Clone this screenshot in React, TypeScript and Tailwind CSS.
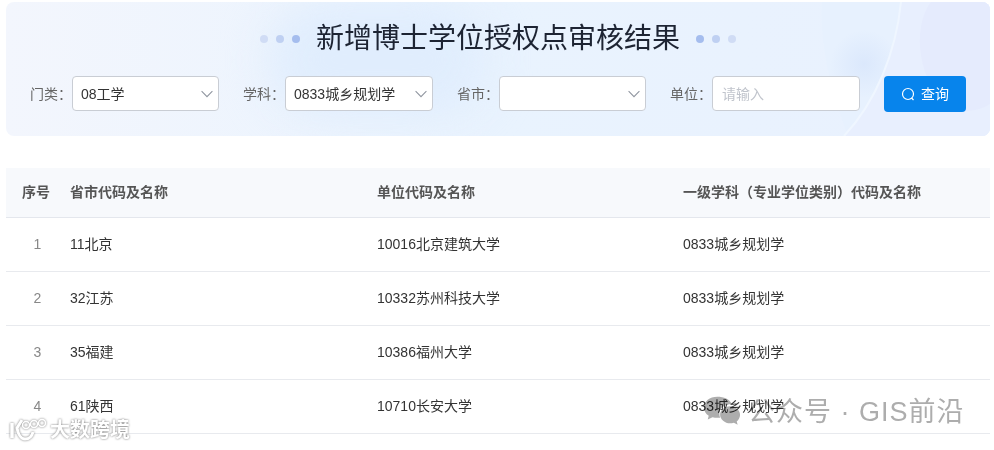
import React from "react";

const FONT = "font-['Liberation_Sans','Noto_Sans_CJK_SC',sans-serif]";
const COLON = "\uFF1A";

const Chevron = () => (
  <svg width="12" height="12" viewBox="0 0 12 12" fill="none" className="shrink-0">
    <path d="M.6 3.200 6 8.600l5.400-5.400" stroke="#9096a0" strokeWidth="1.100" />
  </svg>
);

const Select = ({ value, wide }: { value?: string; wide?: boolean }) => (
  <div className={`flex h-[35px] items-center justify-between rounded-[4px] border border-[#c9cdd4] bg-white pl-[8px] pr-[5px] ${wide ? "w-[148px]" : "w-[147px]"}`}>
    <span className="pt-[1px] text-[14px] text-[#333]">{value}</span>
    <Chevron />
  </div>
);

const Label = ({ children }: { children: string }) => (
  <span className="w-[42px] shrink-0 whitespace-nowrap text-[14px] leading-[36px] text-[#666]">{children + COLON}</span>
);

const Dots = ({ reverse }: { reverse?: boolean }) => (
  <div className={`flex gap-[8px] ${reverse ? "flex-row-reverse" : ""}`}>
    <span className="h-[8px] w-[8px] rounded-full bg-[#d0dcf5]" />
    <span className="h-[8px] w-[8px] rounded-full bg-[#bfd0f2]" />
    <span className="h-[8px] w-[8px] rounded-full bg-[#a5bdee]" />
  </div>
);

const rows = [
  ["1", "11北京", "10016北京建筑大学", "0833城乡规划学"],
  ["2", "32江苏", "10332苏州科技大学", "0833城乡规划学"],
  ["3", "35福建", "10386福州大学", "0833城乡规划学"],
  ["4", "61陕西", "10710长安大学", "0833城乡规划学"],
];

export default function App() {
  return (
    <div className={`${FONT} relative h-[450px] w-[994px] overflow-hidden bg-white px-[6px] pt-[2px]`}>
      <div className="relative h-[134px] w-[984px] overflow-hidden rounded-[8px] bg-gradient-to-r from-[#f3f6fd] via-[#e9f3fe] to-[#e9f1fe]">
        <div className="absolute left-[262px] top-[0px] h-[115px] w-[220px] rounded-full bg-[#e0edfd] blur-[22px]" />
        <svg className="absolute left-0 top-0" width="984" height="134" viewBox="0 0 984 134" fill="none">
          <defs>
            <radialGradient id="glow" cx="0.5" cy="0.5" r="0.5">
              <stop offset="0" stopColor="#dbe8fc" />
              <stop offset="1" stopColor="#dbe8fc" stopOpacity="0" />
            </radialGradient>
          </defs>
          <path d="M816 0C814 40 822 80 842 134H984V0Z" fill="#e7f1fe" />
          <circle cx="858" cy="62" r="34" fill="url(#glow)" />
          <path d="M895 0C890 50 870 100 838 134H984V0Z" fill="#e8effe" />
          <path d="M895 0C890 50 870 100 838 134" stroke="#eff6ff" strokeWidth="2" />
          <path d="M984 0H925C905 25 912 85 945 105C960 112 975 108 984 102Z" fill="#e5ebfd" />
        </svg>

        <div className="relative flex h-[74px] items-center justify-center gap-[16px]">
          <Dots />
          <h1 className="text-[28px] font-normal leading-[40px] text-[#1d2433]">新增博士学位授权点审核结果</h1>
          <Dots reverse />
        </div>

        <div className="relative flex items-start pl-[24px]">
          <Label>门类</Label>
          <Select value="08工学" />
          <div className="w-[24px]" />
          <Label>学科</Label>
          <Select value="0833城乡规划学" wide />
          <div className="w-[24px]" />
          <Label>省市</Label>
          <Select />
          <div className="w-[24px]" />
          <Label>单位</Label>
          <div className="flex h-[35px] w-[148px] items-center rounded-[4px] border border-[#c9cdd4] bg-white pl-[9px] pt-[1px] text-[14px] text-[#c0c4cc]">请输入</div>
          <button className="ml-[24px] flex h-[36px] w-[82px] items-center justify-center gap-[5px] rounded-[4px] bg-[#0784ec] text-[14px] text-white">
            <svg width="15" height="15" viewBox="0 0 15 15" fill="none">
              <circle cx="7" cy="7" r="5.500" stroke="white" strokeWidth="1.200" />
              <path d="M10.500 11l2 2" stroke="white" strokeWidth="1.200" />
            </svg>
            查询
          </button>
        </div>
      </div>

      <div className="mt-[32px] w-[984px]">
        <div className="flex h-[50px] items-center border-b border-[#e4e7ed] bg-[#f7f9fc] text-[14px] font-bold text-[#555]">
          <div className="w-[64px] pr-[4px] text-center">序号</div>
          <div className="w-[307px]">省市代码及名称</div>
          <div className="w-[306px]">单位代码及名称</div>
          <div>{"一级学科\uFF08专业学位类别\uFF09代码及名称"}</div>
        </div>
        {rows.map((r) => (
          <div key={r[0]} className="flex h-[54px] items-center border-b border-[#e8eaee] text-[14px] text-[#333]">
            <div className="w-[64px] pr-[1px] text-center text-[#888]">{r[0]}</div>
            <div className="w-[307px]">{r[1]}</div>
            <div className="w-[306px]">{r[2]}</div>
            <div>{r[3]}</div>
          </div>
        ))}
      </div>

      <div className="absolute left-[9px] top-[418px] flex items-center text-[20px] leading-[24px] text-white drop-shadow-[0_0_1px_#777]">
        <svg width="40" height="24" viewBox="0 0 40 24" fill="none" stroke="white">
          <path d="M3 5v15" strokeWidth="3.500" />
          <path d="M13 2 8 10c1 6 4 11 8 11 5 0 7-3 8-7" strokeWidth="3" />
          <circle cx="17" cy="7" r="3.500" strokeWidth="1.500" />
          <circle cx="25" cy="6" r="3.500" strokeWidth="1.500" />
          <circle cx="33" cy="5" r="3.500" strokeWidth="1.500" />
        </svg>
        <span className="ml-[1px] font-bold">大数跨境</span>
      </div>

      <div className="absolute left-[703px] top-[394px] flex items-center text-[27px] leading-[32px] text-[#adadad] mix-blend-multiply">
        <svg width="38" height="32" viewBox="0 0 40 32" fill="#adadad">
          <path d="M15 1C7 1 1 6 1 12c0 4 2 7 5 9l-1 4 5-2.500c2 .5 3 .7 5 .7 1 0 2 0 3-.2-.5-1.500-.8-2.500-.8-4 0-6 6-10.500 13-10.500C28 3.500 22 1 15 1z" />
          <path d="M39 20c0-5-5-9-10.500-9S18 15 18 20s5 9 10.500 9c1.500 0 2.500-.2 4-.6l4 2.100-1-3.500C37.500 25.500 39 23 39 20z" />
        </svg>
        <span className="ml-[7px] pt-[2px] tracking-[1px]">公众号 · GIS前沿</span>
      </div>
    </div>
  );
}
